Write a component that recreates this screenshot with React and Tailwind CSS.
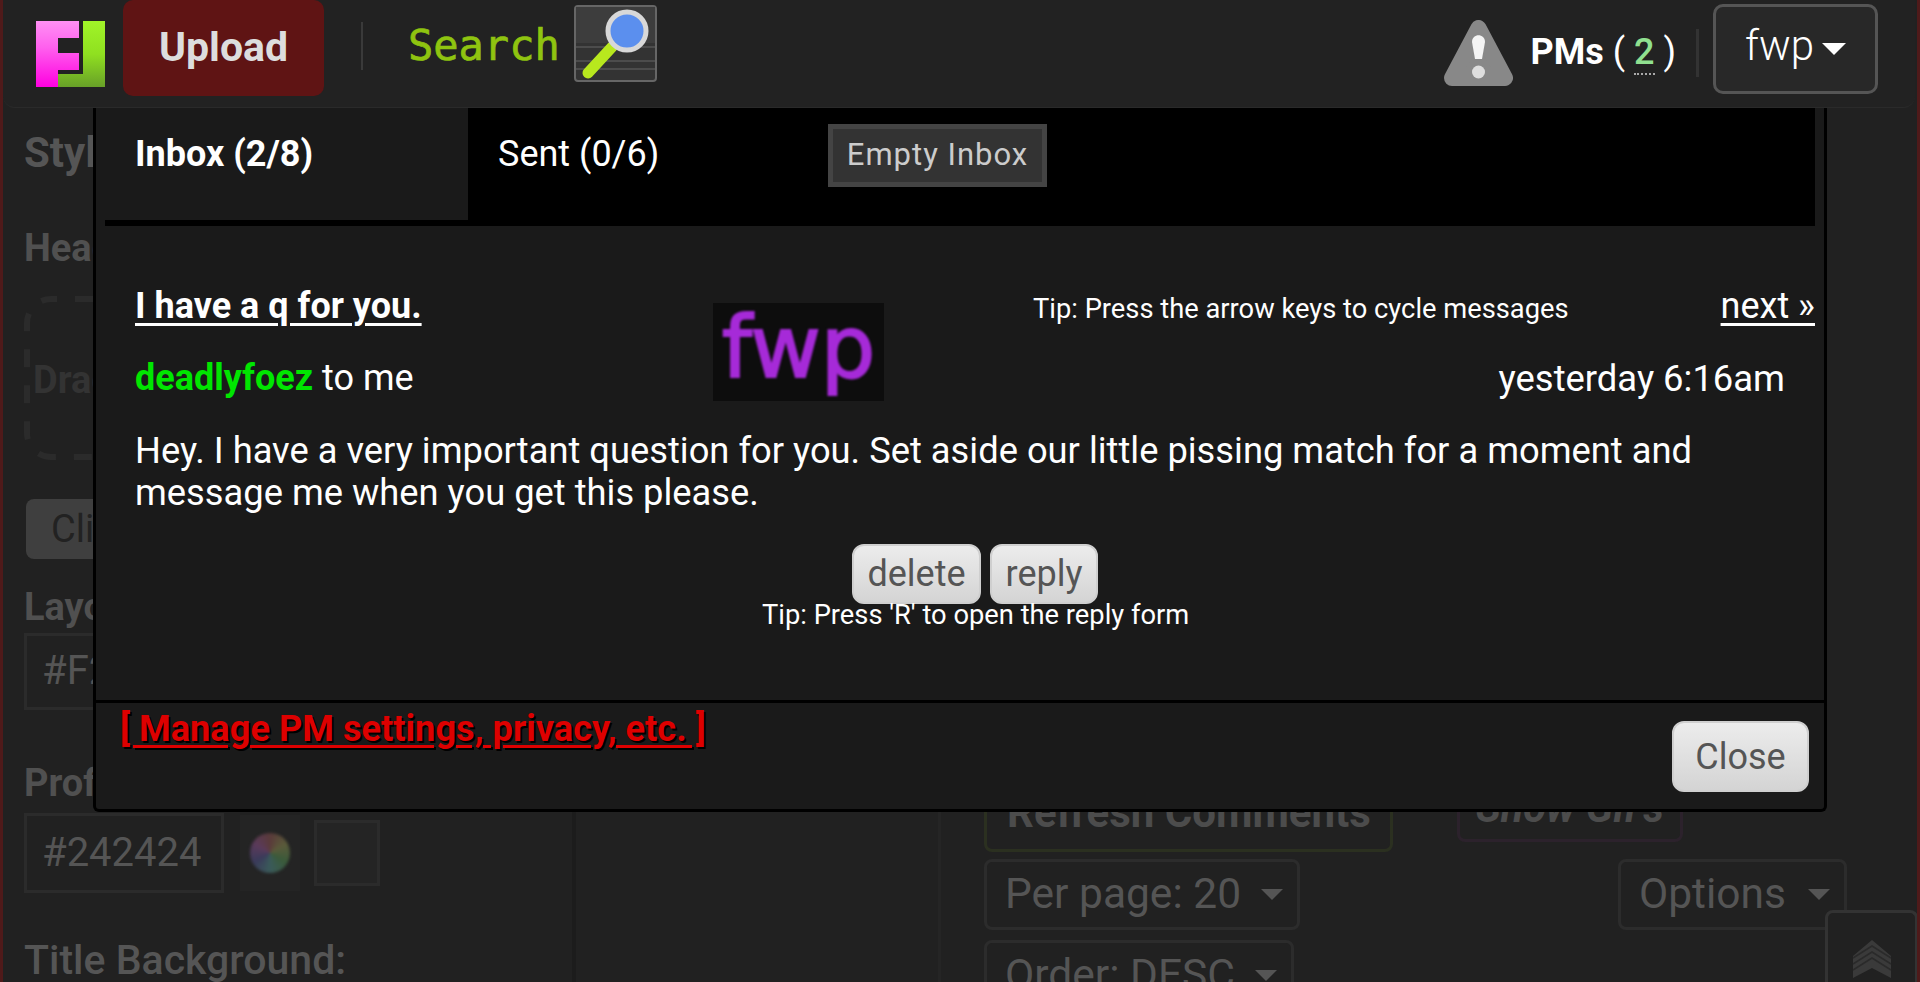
import React from "react";

const roboto = { fontFamily: "Roboto, sans-serif" };

function Logo() {
  return (
    <svg width="69" height="66" viewBox="0 0 69 66" className="shrink-0">
      <defs>
        <linearGradient id="p" x1="0" y1="0" x2="0" y2="1">
          <stop offset="0" stopColor="#ff90f4" />
          <stop offset="0.4" stopColor="#ff60ee" />
          <stop offset="1" stopColor="#ff00e0" />
        </linearGradient>
        <linearGradient id="g" x1="0" y1="0" x2="0" y2="1">
          <stop offset="0" stopColor="#a0f428" />
          <stop offset="0.5" stopColor="#90e020" />
          <stop offset="1" stopColor="#68a028" />
        </linearGradient>
      </defs>
      <path d="M0 0H43V17H22V32H43V49H22V66H0Z" fill="url(#p)" />
      <path d="M47 0H69V66H22V53H47Z" fill="url(#g)" />
    </svg>
  );
}

function SearchIcon() {
  return (
    <svg width="83" height="77" viewBox="0 0 83 77" className="shrink-0">
      <rect x="1" y="1" width="81" height="75" rx="3" fill="#333" stroke="#666" strokeWidth="2" />
      <rect x="2" y="2" width="79" height="36" fill="#3d3d3d" />
      <path d="M2 42H81M2 56H81M2 64H81" stroke="#555" strokeWidth="1.5" />
      <path d="M14 68L38 42" stroke="#b8e81e" strokeWidth="11" strokeLinecap="round" />
      <circle cx="53" cy="26" r="19" fill="#5b8fee" stroke="#d8d8d8" strokeWidth="5" />
    </svg>
  );
}

function Warn() {
  return (
    <svg width="69" height="66" viewBox="0 0 69 66" className="shrink-0">
      <path d="M34.5 8L61 58H8Z" fill="#888" stroke="#888" strokeWidth="16" strokeLinejoin="round" />
      <path d="M28 22C28 13 41 13 41 22L38 39H31Z" fill="#f4f4f4" />
      <circle cx="34.5" cy="52" r="6.5" fill="#dedede" />
    </svg>
  );
}

function DimSelect({ label, w, h }) {
  return (
    <div className={`flex items-center justify-between rounded-lg border-[3px] border-[#2c2c2c] pl-[18px] pr-[14px] text-[42.5px] text-[#555] ${w} ${h}`}>
      <span className="whitespace-nowrap leading-none">{label}</span>
      <span className="h-0 w-0 border-x-[11px] border-t-[11px] border-x-transparent border-t-[#555]" />
    </div>
  );
}

function LightButton({ children, cls }) {
  return (
    <button className={`flex items-center justify-center rounded-xl border-2 border-[#cfcfcf] bg-gradient-to-b from-[#ececec] to-[#d4d4d4] text-[#555] ${cls}`}>
      {children}
    </button>
  );
}

function Background() {
  return (
    <div className="flex min-h-0 flex-1 overflow-hidden pl-[4px]">
      <div className="flex w-[569px] shrink-0 flex-col rounded-t-xl border-r-[4px] border-[#1c1c1c] pl-[17px] pt-[21px]">
        <div className="text-[42px] font-bold leading-[48px] text-[#555]">Style</div>
        <div className="mt-[49px] text-[38px] font-bold leading-[44px] text-[#505050]">Header</div>
        <div className="relative mt-[26px] flex h-[164px] w-[300px] items-center pl-[9px] text-[38px] font-bold text-[#333]">
          <svg className="absolute left-0 top-0" width="300" height="164" viewBox="0 0 300 164" fill="none">
            <rect x="3" y="3" width="294" height="158" rx="24" stroke="#2b2b2b" strokeWidth="6" strokeDasharray="18 18" strokeDashoffset="12" />
          </svg>
          <span className="relative mt-[6px]">Drag</span>
        </div>
        <div className="ml-[2px] mt-[41px] flex h-[60px] w-[200px] items-center rounded-lg bg-[#3f3f3f] pl-[25px] text-[38px] text-[#222]">
          Click
        </div>
        <div className="mt-[26px] text-[38px] font-bold leading-[44px] text-[#505050]">Layout</div>
        <div className="mt-[4px] flex h-[78px] w-[200px] items-center border-[3px] border-[#2b2b2b] pl-[15px] text-[40px] text-[#555]">
          #F2F2F2
        </div>
        <div className="mt-[51px] text-[38px] font-bold leading-[44px] text-[#505050]">Profile</div>
        <div className="mt-[8px] flex items-center gap-[16px]">
          <div className="flex h-[80px] w-[200px] items-center border-[3px] border-[#2b2b2b] pl-[15px] text-[40px] text-[#555]">
            #242424
          </div>
          <div className="flex h-[76px] w-[60px] items-center justify-center bg-[#242424]">
            <div className="h-[40px] w-[40px] rounded-full bg-[conic-gradient(#5a3a3a,#5a5a3a,#3a5a3a,#3a5a5a,#3a3a5a,#5a3a5a,#5a3a3a)] blur-[1.5px]" />
          </div>
          <div className="ml-[-2px] h-[66px] w-[66px] border-[3px] border-[#2b2b2b] bg-[#242424]" />
        </div>
        <div className="mt-[45px] whitespace-nowrap text-[41px] font-medium leading-[44px] text-[#555]">Title Background:</div>
      </div>
      <div className="flex w-[365px] shrink-0 border-r-[3px] border-[#252525]" />
      <div className="flex flex-1 flex-col pl-[43px] pr-[70px] pt-[680px]">
        <div className="flex items-end gap-[64px]">
          <div className="flex h-[64px] w-[409px] shrink-0 items-start rounded-lg border-[3px] border-[#2b3020] pl-[20px] text-[42px] font-bold leading-[44px] text-[#4c4c4c]">
            <span className="whitespace-nowrap">Refresh Comments</span>
          </div>
          <div className="mb-[10px] flex h-[54px] w-[226px] shrink-0 items-start justify-center rounded-lg border-[3px] border-[#2c222c] text-[41.5px] font-bold italic leading-[34px] text-[#4c4c4c]">
            <span className="whitespace-nowrap">Show Gif's</span>
          </div>
        </div>
        <div className="mt-[7px] flex items-start justify-between">
          <DimSelect label="Per page: 20" w="w-[316px]" h="h-[71px]" />
          <DimSelect label="Options" w="w-[229px]" h="h-[71px]" />
        </div>
        <div className="mt-[10px]">
          <DimSelect label="Order: DESC" w="w-[310px]" h="h-[71px]" />
        </div>
      </div>
    </div>
  );
}

function Modal() {
  return (
    <div className="absolute left-[90px] top-[108px] flex h-[704px] w-[1734px] flex-col rounded-b-md border-x-[3px] border-b-[3px] border-black bg-[#1a1a1a] text-white">
      <div className="ml-[9px] flex h-[118px] w-[1710px] shrink-0 items-start border-b-[6px] border-black bg-black">
        <div className="flex h-[112px] w-[363px] items-start bg-[#1a1a1a] pl-[30px] pt-[22px] text-[36px] font-bold leading-[48px]">
          Inbox (2/8)
        </div>
        <div className="flex w-[360px] pl-[30px] pt-[22px] text-[36px] leading-[48px]">Sent (0/6)</div>
        <button className="mt-[16px] flex h-[63px] w-[219px] items-center justify-center border-[5px] border-[#444] bg-[#333] text-[31px] tracking-[1px] text-[#ccc]">
          Empty Inbox
        </button>
      </div>

      <div className="flex flex-1 flex-col pl-[39px] pr-[9px]">
        <div className="flex pt-[58px]">
          <div className="w-[578px] shrink-0">
            <div className="whitespace-nowrap text-[36px] font-bold leading-[44px] underline decoration-[3px] underline-offset-[5px]">I have a q for you.</div>
            <div className="mt-[28px] whitespace-nowrap text-[36px] leading-[44px]">
              <span className="font-bold text-[#00e600]">deadlyfoez</span> to me
            </div>
          </div>
          <div className="mt-[19px] flex h-[98px] w-[171px] shrink-0 items-center justify-center bg-[#0d0d0d] text-[#a62ad8]" style={{ fontFamily: "'DejaVu Sans', sans-serif" }}>
            <span className="mb-[10px] text-[86px] leading-none blur-[1px] [-webkit-text-stroke:2px_#a62ad8]">fwp</span>
          </div>
          <div className="flex flex-1 flex-col">
            <div className="flex items-baseline justify-between pl-[149px]">
              <span className="mt-[1px] whitespace-nowrap text-[27.3px] leading-[44px]">Tip: Press the arrow keys to cycle messages</span>
              <span className="whitespace-nowrap text-[36px] leading-[44px] underline underline-offset-[5px]">next »</span>
            </div>
            <div className="mt-[26px] pr-[30px] text-right text-[36.4px] leading-[44px]">yesterday 6:16am</div>
          </div>
        </div>
        <p className="mt-[29px] w-[1620px] text-[36.3px] leading-[42px]">
          Hey. I have a very important question for you. Set aside our little pissing match for a moment and message me when you get this please.
        </p>
        <div className="ml-[717px] mt-[30px] flex gap-[9px]">
          <LightButton cls="h-[60px] w-[129px] text-[36px]">delete</LightButton>
          <LightButton cls="h-[60px] w-[108px] text-[36px]">reply</LightButton>
        </div>
        <div className="ml-[627px] mt-[-1px] whitespace-nowrap text-[27.3px] leading-[24px]">Tip: Press 'R' to open the reply form</div>
      </div>

      <div className="flex h-[109px] shrink-0 items-start justify-between border-t-[3px] border-black pl-[24px] pr-[15px]">
        <a className="mt-[4px] whitespace-nowrap text-[36.2px] font-bold leading-[44px] text-[#dd0000] underline underline-offset-[4px] [text-shadow:2px_2px_0_#000]">
          [ Manage PM settings, privacy, etc. ]
        </a>
        <LightButton cls="mt-[18px] h-[71px] w-[137px] text-[36px]">Close</LightButton>
      </div>
    </div>
  );
}

export default function App() {
  return (
    <div className="relative flex h-[982px] w-[1920px] flex-col overflow-hidden border-x-[3px] border-[#4f1a1a] bg-[#212121]" style={roboto}>
      <header className="relative z-10 flex h-[108px] w-[1912px] shrink-0 items-center rounded-b-xl border-b-[1px] border-[#2a2a2a] bg-[#222222] pl-[33px]">
        <Logo />
        <div className="mb-[12px] ml-[18px] flex h-[96px] w-[201px] items-center justify-center rounded-[10px] bg-[#5f1414] text-[41px] font-bold text-[#dddddd]">
          Upload
        </div>
        <div className="mb-[16px] ml-[37px] h-[48px] w-[2px] bg-[#3a3a3a]" />
        <div className="mb-[16px] ml-[45px] whitespace-nowrap text-[42px] leading-none text-[#8fc410] [-webkit-text-stroke:0.7px_#8fc410]" style={{ fontFamily: "'DejaVu Sans Mono', monospace" }}>
          Search
        </div>
        <div className="mb-[20px] ml-[14px]"><SearchIcon /></div>
        <div className="mb-[2px] ml-auto mr-[37px] flex items-center">
          <Warn />
          <div className="mb-[2px] ml-[18px] whitespace-nowrap text-[36px] font-bold leading-none text-white">
            PMs <span className="font-normal">(</span>{" "}
            <span className="border-b-[2px] border-dotted border-[#aaa] font-medium text-[#90e090]">2</span>{" "}
            <span className="font-normal">)</span>
          </div>
          <div className="ml-[20px] h-[48px] w-[3px] bg-[#333]" />
          <div className="mb-[8px] ml-[14px] flex h-[90px] w-[165px] items-center justify-center gap-[8px] rounded-[10px] border-[3px] border-[#555] bg-[#282828] text-[42px] font-light text-white">
            <span className="mb-[6px]">fwp</span>
            <span className="h-0 w-0 border-x-[12px] border-t-[12px] border-x-transparent border-t-white" />
          </div>
        </div>
      </header>
      <Background />
      <Modal />
      <div className="absolute bottom-0 right-[-1px] flex h-[72px] w-[93px] items-end justify-center rounded-t-lg border-x-[3px] border-t-[3px] border-[#333] bg-[#212121] pb-[4px]">
        <svg width="38" height="38" viewBox="0 0 38 38">
          <path d="M19 0L38 16V38L19 28L0 38V16Z" fill="#3a3a3a" />
          <path d="M0 18L19 6L38 18M0 24L19 12L38 24M0 30L19 18L38 30" stroke="#2a2a2a" strokeWidth="1.5" fill="none" />
        </svg>
      </div>
    </div>
  );
}
